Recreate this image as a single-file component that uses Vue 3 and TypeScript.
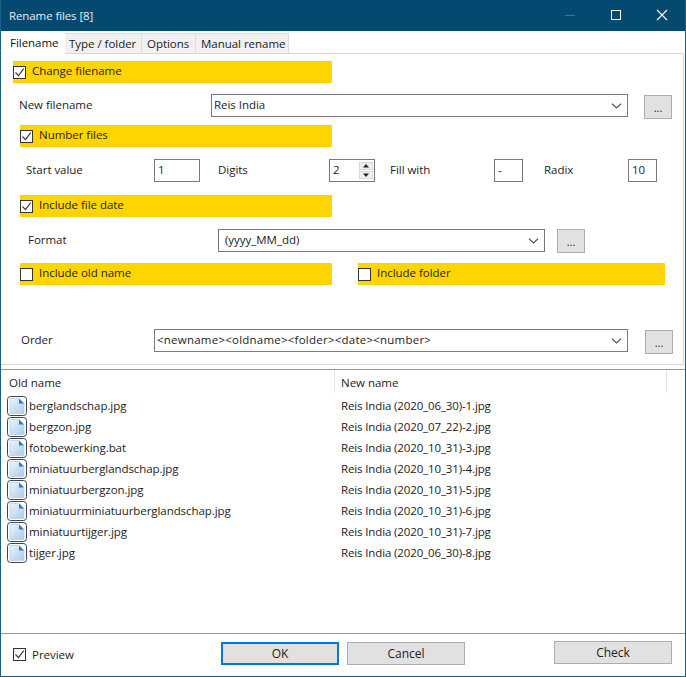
<script setup lang="ts">
interface FileRow { oldName: string; newName: string }
const tabs: string[] = ['Type / folder', 'Options', 'Manual rename']
const files: FileRow[] = [
  { oldName: 'berglandschap.jpg', newName: 'Reis India (2020_06_30)-1.jpg' },
  { oldName: 'bergzon.jpg', newName: 'Reis India (2020_07_22)-2.jpg' },
  { oldName: 'fotobewerking.bat', newName: 'Reis India (2020_10_31)-3.jpg' },
  { oldName: 'miniatuurberglandschap.jpg', newName: 'Reis India (2020_10_31)-4.jpg' },
  { oldName: 'miniatuurbergzon.jpg', newName: 'Reis India (2020_10_31)-5.jpg' },
  { oldName: 'miniatuurminiatuurberglandschap.jpg', newName: 'Reis India (2020_10_31)-6.jpg' },
  { oldName: 'miniatuurtijger.jpg', newName: 'Reis India (2020_10_31)-7.jpg' },
  { oldName: 'tijger.jpg', newName: 'Reis India (2020_06_30)-8.jpg' },
]
</script>

<template>
  <div class="window">
    <header class="titlebar">
      <span class="title">Rename files [8]</span>
      <div class="winctl">
        <svg width="46" height="31" viewBox="0 0 46 31"><path d="M18 15.5h10" stroke="#3f7391" fill="none" /></svg>
        <svg width="46" height="31" viewBox="0 0 46 31"><rect x="18.500" y="10.500" width="9" height="9" stroke="#fff" fill="none" /></svg>
        <svg width="46" height="31" viewBox="0 0 46 31"><path d="M18 10l10 10M28 10l-10 10" stroke="#fff" stroke-width="1.100" fill="none" /></svg>
      </div>
    </header>

    <nav class="tabs">
      <div class="tab active">Filename</div>
      <div v-for="t in tabs" :key="t" class="tab">{{ t }}</div>
    </nav>

    <section class="pane">
      <div class="band band-first">
        <span class="check"><svg width="11" height="11" viewBox="0 0 11 11"><path d="M1.500 5.500l3 3.200 5.200-7" /></svg></span>
        <span>Change filename</span>
      </div>

      <div class="row row-name">
        <span class="label w-name">New filename</span>
        <div class="combo c-name"><span>Reis India</span><svg class="chev" width="11" height="6" viewBox="0 0 11 6"><path d="M1 .8l4.500 4.200L10 .8" /></svg></div>
        <button class="more m-name">...</button>
      </div>

      <div class="band band-std b-number">
        <span class="check"><svg width="11" height="11" viewBox="0 0 11 11"><path d="M1.500 5.500l3 3.200 5.200-7" /></svg></span>
        <span>Number files</span>
      </div>

      <div class="row row-num">
        <span class="label w-start">Start value</span>
        <div class="field f-start">1</div>
        <span class="label w-digits">Digits</span>
        <div class="field f-spin">2
          <span class="spin">
            <svg width="14" height="8" viewBox="0 0 14 8"><rect width="14" height="8" fill="#efefef" stroke="#c4c4c4" /><path d="M7 2l3 3.500H4z" fill="#222" /></svg>
            <svg width="14" height="8" viewBox="0 0 14 8"><rect width="14" height="8" fill="#efefef" stroke="#c4c4c4" /><path d="M7 6L4 2.500h6z" fill="#222" /></svg>
          </span>
        </div>
        <span class="label w-fill">Fill with</span>
        <div class="field f-fill">-</div>
        <span class="label w-radix">Radix</span>
        <div class="field f-radix">10</div>
      </div>

      <div class="band band-std b-date">
        <span class="check"><svg width="11" height="11" viewBox="0 0 11 11"><path d="M1.500 5.500l3 3.200 5.200-7" /></svg></span>
        <span>Include file date</span>
      </div>

      <div class="row row-format">
        <span class="label w-format">Format</span>
        <div class="combo c-format"><span>(yyyy_MM_dd)</span><svg class="chev" width="11" height="6" viewBox="0 0 11 6"><path d="M1 .8l4.500 4.200L10 .8" /></svg></div>
        <button class="more m-format">...</button>
      </div>

      <div class="row-two">
        <div class="band band-std b-old"><span class="check"></span><span>Include old name</span></div>
        <div class="band band-std b-folder"><span class="check"></span><span>Include folder</span></div>
      </div>

      <div class="row row-order">
        <span class="label w-order">Order</span>
        <div class="combo c-order"><span class="order-text">&lt;newname&gt;&lt;oldname&gt;&lt;folder&gt;&lt;date&gt;&lt;number&gt;</span><svg class="chev" width="11" height="6" viewBox="0 0 11 6"><path d="M1 .8l4.500 4.200L10 .8" /></svg></div>
        <button class="more m-order">...</button>
      </div>
    </section>

    <section class="list">
      <div class="list-head">
        <span class="col-old">Old name</span>
        <span class="col-new">New name</span>
        <span class="col-rest"></span>
      </div>
      <div v-for="f in files" :key="f.oldName" class="list-row">
        <svg class="file" width="20" height="20" viewBox="0 0 20 20">
          <defs>
            <linearGradient id="docfill" x1="0" y1="0" x2="1" y2="1">
              <stop offset="0" stop-color="#eef5fc" />
              <stop offset="1" stop-color="#a9cbec" />
            </linearGradient>
          </defs>
          <rect x=".5" y=".5" width="19" height="19" rx="3" fill="#fff" stroke="#3d4650" />
          <path d="M3 2.500h9l5 5v10H3z" fill="url(#docfill)" stroke="#b9cfe4" stroke-width=".8" />
          <path d="M12 2.500l5 5h-5z" fill="#2f78c4" />
        </svg>
        <span class="col-file">{{ f.oldName }}</span>
        <span class="col-target">{{ f.newName }}</span>
      </div>
    </section>

    <footer class="footer">
      <label class="preview">
        <span class="check"><svg width="11" height="11" viewBox="0 0 11 11"><path d="M1.500 5.500l3 3.200 5.200-7" /></svg></span>
        <span>Preview</span>
      </label>
      <button class="btn ok">OK</button>
      <button class="btn cancel">Cancel</button>
      <button class="btn check-btn">Check</button>
    </footer>
  </div>
</template>

<style>
html, body { margin: 0; background: #fff; }
</style>

<style scoped>
.window {
  box-sizing: border-box;
  width: 686px;
  height: 677px;
  display: flex;
  flex-direction: column;
  background: #fff;
  border: 1px solid #1c5f80;
  border-top: 0;
  font-family: "Open Sans", "Noto Sans", sans-serif;
  font-size: 11.5px;
  letter-spacing: -.03px;
  color: #1c1c1c;
  overflow: hidden;
}
.titlebar {
  flex: 0 0 31px;
  margin: 0 -1px;
  background: #04496f;
  display: flex;
  align-items: center;
  justify-content: space-between;
  color: #e6eef3;
  padding-left: 9px;
}
.title { font-size: 11.5px; letter-spacing: -.1px; }
.winctl { display: flex; padding-right: 1px; }
.winctl svg { display: block; }

.tabs { flex: 0 0 22px; display: flex; align-items: flex-end; padding-left: 1px; }
.tab {
  box-sizing: border-box;
  height: 20px;
  line-height: 19px;
  padding: 0 6px 0 5px;
  margin-bottom: 0;
  white-space: nowrap;
  background: #f0f0f0;
  border: 1px solid #dedede;
  border-bottom: 0;
  border-left: 0;
}
.tab:nth-child(2) { width: 77px; padding-left: 4px; }
.tab:nth-child(3) { width: 54px; }
.tab:nth-child(4) { width: 93px; }
.tab.active {
  width: 63px;
  height: 22px;
  line-height: 22px;
  padding: 0 0 0 8px;
  background: #fff;
  border: 0;
  color: #111;
  position: relative;
  z-index: 1;
  margin-bottom: -1px;
}

.pane {
  box-sizing: border-box;
  flex: 0 0 312px;
  margin-right: 1px;
  border-top: 1px solid #d9d9d9;
  border-right: 1px solid #d9d9d9;
  border-bottom: 1px solid #d9d9d9;
}
.band {
  display: flex;
  align-items: center;
  height: 22px;
  background: #ffd500;
  gap: 6px;
}
.band > span:last-child { position: relative; top: -2px; }
.band-first { margin: 7px 0 0 12px; width: 319px; }
.band-std { width: 312px; margin-left: 19px; }
.b-number { margin-top: 6px; }
.b-date { margin-top: 13px; }

.check {
  box-sizing: border-box;
  width: 13px;
  height: 13px;
  flex: none;
  border: 1px solid #333;
  background: #fff;
  display: flex;
  align-items: center;
  justify-content: center;
}
.check svg path { fill: none; stroke: #333; stroke-width: 1.1; }

.row { display: flex; align-items: flex-start; }
.label { line-height: 22px; flex: none; }
.row-name { margin-top: 11px; height: 25px; }
.w-name { width: 192px; margin-left: 18px; }
.c-name { width: 417px; height: 23px; padding-left: 2px; }
.m-name { margin: 1px 0 0 16px; }

.row-num { margin-top: 12px; height: 23px; }
.w-start { width: 128px; margin-left: 25px; }
.f-start { width: 46px; }
.w-digits { width: 111px; margin-left: 18px; }
.f-spin { width: 46px; border-color: #b5b5b5; position: relative; }
.spin { position: absolute; right: 1px; top: 2px; display: flex; flex-direction: column; gap: 1px; }
.spin svg { display: block; }
.w-fill { width: 104px; margin-left: 15px; }
.f-fill { width: 29px; }
.w-radix { width: 84px; margin-left: 21px; }
.f-radix { width: 29px; }

.field {
  box-sizing: border-box;
  height: 23px;
  line-height: 20px;
  padding-left: 3px;
  border: 1px solid #7a7a7a;
  background: #fff;
  flex: none;
}
.combo {
  box-sizing: border-box;
  flex: none;
  display: flex;
  align-items: center;
  justify-content: space-between;
  padding: 0 5px 0 2px;
  border: 1px solid #7a7a7a;
  background: #fff;
  height: 23px;
}
.combo > span { position: relative; top: -1px; }
.chev { flex: none; }
.chev path { fill: none; stroke: #555; stroke-width: 1.2; }
.more {
  box-sizing: border-box;
  width: 28px;
  height: 24px;
  flex: none;
  padding: 0;
  font: inherit;
  font-size: 11px;
  color: #222;
  background: #e1e1e1;
  border: 1px solid #adadad;
  border-radius: 0;
}

.row-format { margin-top: 12px; height: 24px; }
.w-format { width: 190px; margin-left: 27px; }
.c-format { width: 327px; padding-left: 6px; }
.m-format { margin-left: 12px; }

.row-two { display: flex; margin-top: 10px; }
.b-old { margin-left: 19px; }
.b-folder { width: 307px; margin-left: 26px; }

.row-order { margin-top: 44px; height: 25px; }
.w-order { width: 133px; margin-left: 20px; }
.c-order { width: 474px; }
.order-text { letter-spacing: .23px; }
.m-order { margin: 1px 0 0 17px; }

.list {
  box-sizing: border-box;
  flex: 0 0 265px;
  margin: 4px -1px 0;
  border-top: 1px solid #8f979c;
  border-bottom: 1px solid #8f979c;
  border-left: 1px solid #1c5f80;
  border-right: 1px solid #1c5f80;
  background: #fff;
}
.list-head { display: flex; height: 26px; }
.col-old { box-sizing: border-box; width: 334px; padding-left: 8px; border-right: 1px solid #e5e5e5; height: 23px; line-height: 25px; }
.col-new { box-sizing: border-box; width: 332px; padding-left: 6px; border-right: 1px solid #e5e5e5; height: 23px; line-height: 25px; }
.col-rest { flex: 1; }
.list-row { display: flex; align-items: flex-start; height: 21px; line-height: 20px; letter-spacing: -.13px; }
.file { flex: none; margin-left: 6px; }
.col-file { width: 312px; flex: none; margin-left: 2px; letter-spacing: -.07px; }
.col-target { flex: none; }

.footer {
  flex: 1;
  display: flex;
  align-items: flex-start;
}
.preview { display: flex; align-items: center; gap: 6px; margin: 14px 0 0 12px; width: 208px; line-height: 13px; }
.btn {
  box-sizing: border-box;
  width: 118px;
  height: 23px;
  padding: 0 0 1px;
  margin-top: 8px;
  font: inherit;
  font-size: 12px;
  color: #1c1c1c;
  background: #e1e1e1;
  border: 1px solid #adadad;
  border-radius: 0;
}
.ok { border: 2px solid #0078d7; }
.cancel { margin-left: 8px; }
.check-btn { margin: 7px 0 0 89px; }
</style>
